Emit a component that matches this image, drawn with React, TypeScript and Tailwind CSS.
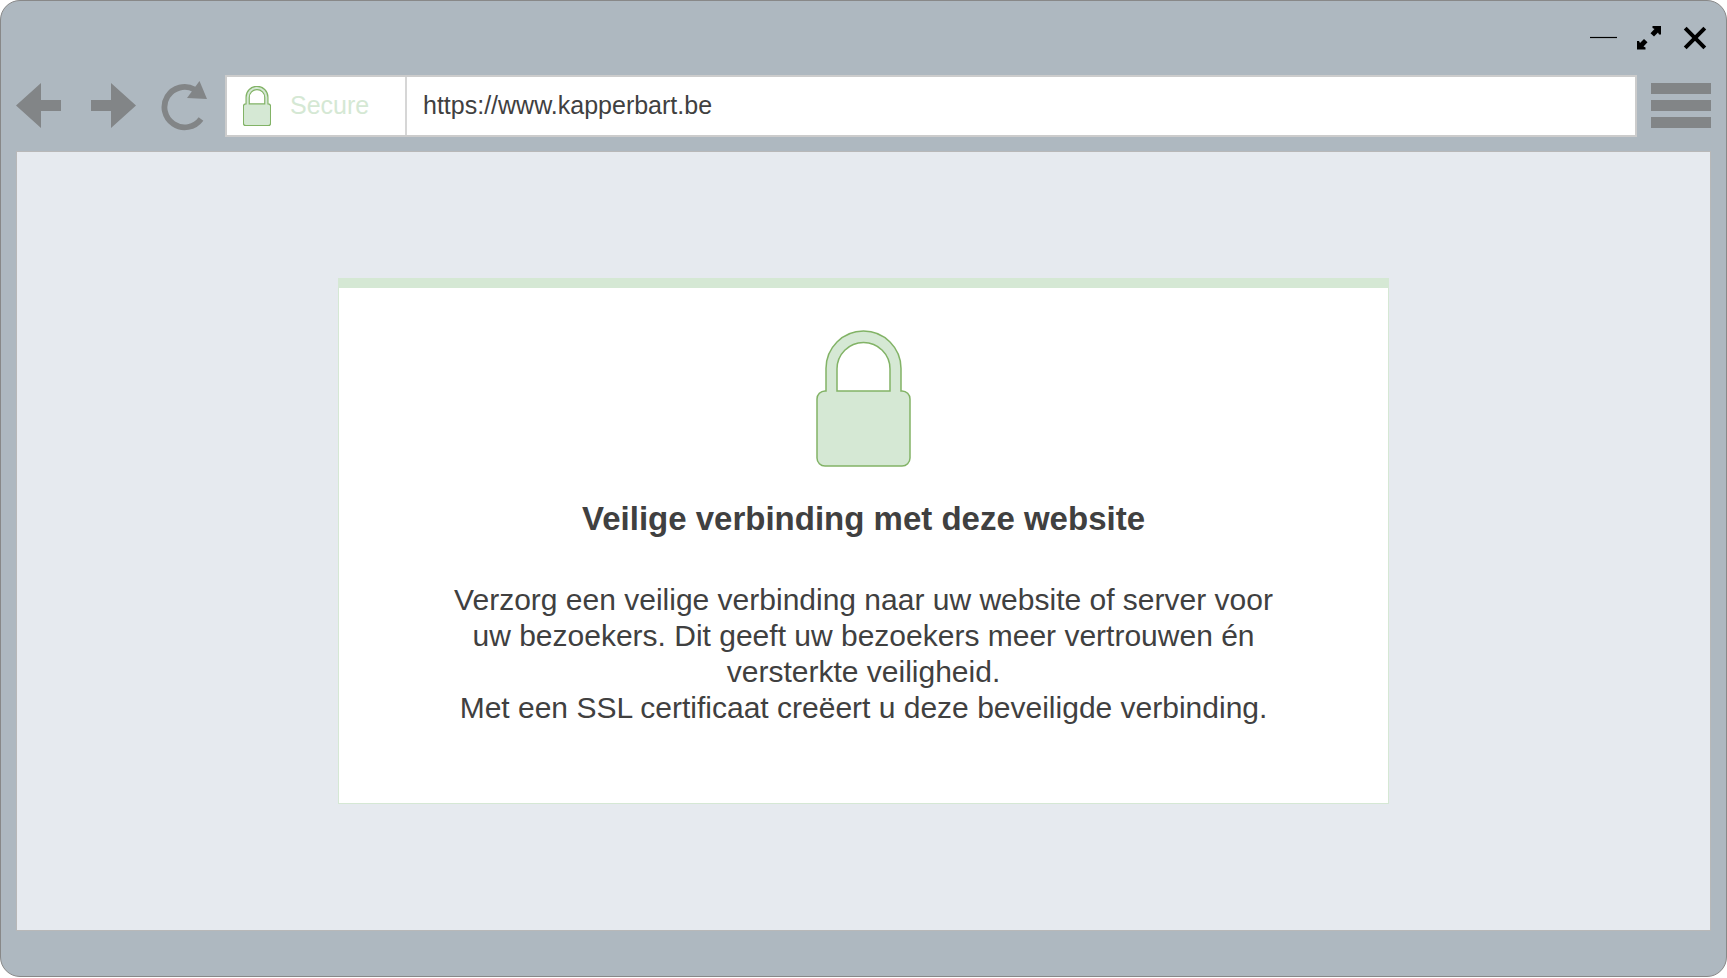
function PadlockIcon({ className, strokeWidth }: { className: string; strokeWidth: number }) {
  return (
    <svg viewBox="0 0 95 137" className={className} fill="#d5e8d4" stroke="#82b366" strokeWidth={strokeWidth} aria-hidden="true">
      <path
        fillRule="evenodd"
        d="M10 61V38.500A37.500 37.500 0 0 1 85 38.500V61H86A8 8 0 0 1 94 69V128A8 8 0 0 1 86 136H9A8 8 0 0 1 1 128V69A8 8 0 0 1 9 61ZM21 61H74V39A26.500 26.500 0 0 0 21 39Z"
      />
    </svg>
  );
}

function WindowControls() {
  return (
    <div className="flex h-[74px] shrink-0 items-center justify-end gap-5 pr-1">
      <button type="button" aria-label="Minimize">
        <svg viewBox="0 0 27 24" className="h-6 w-[27px]">
          <path d="M0 11.500H27" stroke="#000" strokeWidth="1.200" />
        </svg>
      </button>
      <button type="button" aria-label="Maximize">
        <svg viewBox="0 0 24 24" className="size-6" fill="#000">
          <path d="M15.500 0H24V8.500H22L21 6.500L17 10.500L13.500 7.300L17.500 3L15.500 2ZM8.500 23.500H0V15H2L3 17L7 13L10.500 16.200L6.500 20.500L8.500 21.500Z" />
        </svg>
      </button>
      <button type="button" aria-label="Close" className="ml-0.5">
        <svg viewBox="0 0 24 24" className="size-6" stroke="#000" strokeWidth="4">
          <path d="M2.200 2.200L21.800 21.800M21.800 2.200L2.200 21.800" />
        </svg>
      </button>
    </div>
  );
}

function NavigationBar() {
  return (
    <nav className="flex shrink-0 items-center">
      <button type="button" aria-label="Back">
        <svg viewBox="0 0 45 46" className="h-[46px] w-[45px]" fill="#828587">
          <path d="M0 22.500L25 0V17H45V28H25V45Z" />
        </svg>
      </button>
      <button type="button" aria-label="Forward" className="ml-[30px]">
        <svg viewBox="0 0 45 46" className="h-[46px] w-[45px]" fill="#828587">
          <path d="M45 22.500L20 0V17H0V28H20V45Z" />
        </svg>
      </button>
      <button type="button" aria-label="Reload" className="ml-[25px]">
        <svg viewBox="0 0 46 50" className="h-[50px] w-[46px]">
          <path d="M33.500 8.500A20.200 20.200 0 1 0 40 38" fill="none" stroke="#828587" strokeWidth="5.800" />
          <path d="M38.500 0L46 18L26 17Z" fill="#828587" />
        </svg>
      </button>
      <div className="ml-[18px] flex h-[62px] min-w-0 flex-1 border-2 border-[#cccccc] bg-white text-[25px]">
        <div className="flex w-[180px] shrink-0 items-center border-r-2 border-[#d6d6d6] pl-4 text-[#d5e8d4]">
          <PadlockIcon className="h-10 w-7" strokeWidth={4} />
          <span className="ml-[19px]">Secure</span>
        </div>
        <input
          type="text"
          aria-label="Address"
          defaultValue="https://www.kapperbart.be"
          className="min-w-0 flex-1 px-4 text-[#404040] outline-none"
        />
      </div>
      <button type="button" aria-label="Menu" className="ml-[14px]">
        <svg viewBox="0 0 60 46" className="h-[46px] w-[60px]" fill="#828587">
          <path d="M0 0H60V11H0ZM0 17H60V28H0ZM0 34H60V45H0Z" />
        </svg>
      </button>
    </nav>
  );
}

export default function App() {
  return (
    <div className="flex min-h-[calc(100vh-1px)] flex-col rounded-[20px] border border-[#888888] bg-[#aeb8c0] px-[15px] pb-[45px] font-['Liberation_Sans',Arial,sans-serif]">
      <WindowControls />
      <NavigationBar />
      <main className="mt-[14px] flex flex-1 items-center justify-center border border-[#b8b8b8] bg-[#e6eaef] p-6">
        <section className="flex w-full max-w-[1051px] flex-col items-center border border-t-10 border-[#d5e8d4] bg-white px-6 pt-[42px] pb-[77px] text-center text-[#404040]">
          <PadlockIcon className="h-[137px] w-[95px]" strokeWidth={1.5} />
          <h1 className="mt-8 text-[33px] leading-10 font-bold">Veilige verbinding met deze website</h1>
          <p className="mt-[43px] max-w-[840px] text-[30px] leading-9">
            Verzorg een veilige verbinding naar uw website of server voor uw bezoekers. Dit geeft uw bezoekers meer
            vertrouwen én versterkte veiligheid.
            <br />
            Met een SSL certificaat creëert u deze beveiligde verbinding.
          </p>
        </section>
      </main>
    </div>
  );
}
